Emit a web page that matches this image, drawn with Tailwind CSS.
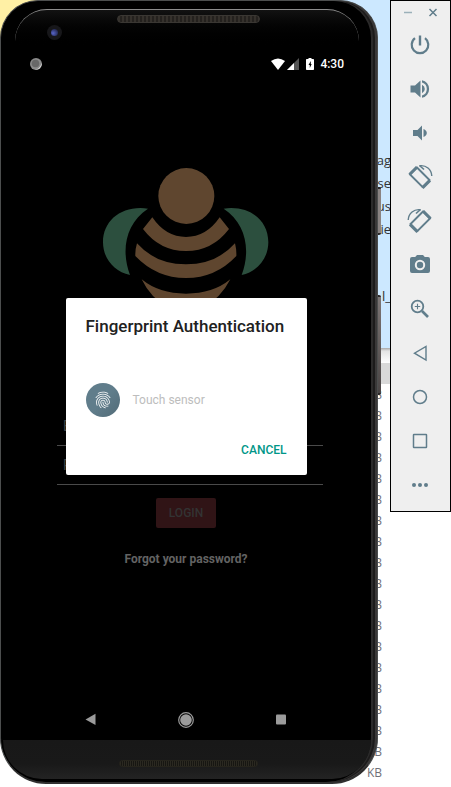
<!DOCTYPE html>
<html lang="en">
<head>
<meta charset="utf-8">
<meta name="viewport" content="width=device-width, initial-scale=1">
<title>Android Emulator</title>
<script src="https://cdn.jsdelivr.net/npm/@tailwindcss/browser@4"></script>
</head>
<body class="bg-white font-[Roboto,sans-serif]">
<div class="relative isolate flex min-h-screen items-start gap-3 overflow-hidden">

  <!-- Windows behind the emulator -->
  <div class="absolute inset-0 -z-10 flex flex-col font-['Open_Sans','Noto_Sans',sans-serif]" aria-hidden="true">
    <div class="flex h-[348px] bg-[#cce8ff]">
      <div class="h-16 w-16 bg-[#fff0a5]"></div>
      <div class="ml-auto mr-[60px] flex flex-col items-end pt-[149px] text-[13px] leading-[23px] text-[#333]">
        <span>pag</span><span>use</span><span>us</span><span>nie</span>
        <span class="pt-11">l_</span>
      </div>
    </div>
    <div class="h-[15px] bg-linear-to-b from-[#a8a8a8] via-[#e4e4e4] via-20% to-white"></div>
    <div class="h-[21px] bg-[#d9d9d9]"></div>
    <div class="mr-[69px] flex flex-col items-end text-[12px] leading-[21px] text-[#707078]">
      <span>KB</span><span>KB</span><span>KB</span><span>KB</span><span>KB</span><span>KB</span><span>KB</span><span>KB</span><span>KB</span><span>KB</span><span>KB</span><span>KB</span><span>KB</span><span>KB</span><span>KB</span><span>KB</span><span>KB</span><span>KB</span><span>KB</span>
    </div>
  </div>

  <!-- Phone -->
  <div class="relative mb-[3px] min-w-0 flex-1 self-stretch">
    <div class="absolute -right-[3px] top-[187px] h-12 w-2 rounded-r-xs border-y-2 border-[#2a2626] bg-[#8a8382]"></div>
    <div class="absolute -right-[3px] top-[295px] h-[100px] w-2 rounded-r-xs border-y-2 border-[#2a2626] bg-linear-to-b from-[#7d7675] to-[#4a4545]"></div>

    <div class="relative flex h-full flex-col rounded-t-[38px] rounded-b-[46px] border border-[#4c4e4e] border-b-2 border-b-[#303030] bg-black pl-[14px] pr-5 shadow-[inset_-2px_0_0_#3a3838,inset_-4px_0_0_#1c1b1b,inset_-6px_0_0_#2b2a2a]">
      <!-- Top bezel -->
      <div class="flex h-[53px] shrink-0 justify-center">
        <div class="absolute left-[14px] right-[18px] top-2 h-10 rounded-t-[32px] border-t border-[#8c8c8c] bg-linear-to-b from-[#121212] to-black"></div>
        <div class="absolute left-[46px] top-[24px] flex size-[15px] items-center justify-center rounded-full bg-[#17171a]">
          <div class="size-[7px] rounded-full bg-radial-[at_30%_60%] from-[#5865c8] to-[#11132a]"></div>
        </div>
        <div class="relative mt-[14px] ml-1 h-[8px] w-[143px] rounded-full border border-[#3a3733] bg-[repeating-linear-gradient(90deg,#35312c_0px,#35312c_2px,#24211e_2px,#24211e_4px)]"></div>
      </div>

      <!-- Screen -->
      <div class="relative flex flex-1 flex-col bg-black">
        <header class="flex h-5 shrink-0 items-center pl-[15px] pr-[13px] text-white">
          <svg class="size-3" viewBox="0 0 12 12" aria-hidden="true"><circle cx="6" cy="6" r="6" fill="#8b8b8b"/><path d="M11.6 5A6 6 0 0 1 5 11.8Q10 11 11.6 5Z" fill="#e4e4e4"/><circle cx="5.5" cy="5.5" r="3.8" fill="#686868"/></svg>
          <div class="ml-auto flex items-center">
            <svg class="h-3 w-[14px]" viewBox="0 0 14 12" aria-label="Wi-Fi"><path d="M0 3Q7-2 14 3L7 12Z" fill="#fff"/></svg>
            <svg class="ml-[2px] h-3 w-3" viewBox="0 0 12 12" aria-label="Signal"><path d="M12 0V12H0Z" fill="#555"/><path d="M7 5V12H0Z" fill="#fff"/></svg>
            <svg class="ml-[7px] h-3 w-2" viewBox="0 0 8 12" aria-label="Charging"><path fill="#fff" fill-rule="evenodd" d="M2.500 0h3v1H7.200q.8 0 .8.8v9.400q0 .8-.8.8H.8q-.8 0-.8-.8V1.800Q0 1 .8 1H2.500ZM4.800 3 2.500 7H3.800V10L5.700 6H4.800Z"/></svg>
            <span class="ml-[6px] text-[12px] font-medium leading-5">4:30</span>
          </div>
        </header>

        <main class="relative flex flex-1 flex-col items-center px-[34px]">
          <svg class="mt-[94px] h-[157px] w-[166px]" viewBox="42 39 498 471" aria-label="Bee logo">
            <g fill="#5f462f">
              <circle cx="292" cy="123" r="84"/>
              <path d="M190 187Q230 246 291 246Q352 246 392 187L420 222Q370 288 291 288Q212 288 162 222Z"/>
              <path d="M144 265Q200 328 291 328Q382 328 438 265Q443 285 442 303Q380 369 291 369Q202 369 139 303Q138 285 144 265Z"/>
              <path d="M158 373Q210 416 291 416Q372 416 424 373Q395 430 340 460H240Q185 430 158 373Z"/>
            </g>
            <g fill="#2c4f3e">
              <path d="M177 161C100 150 42 195 42 262C42 310 75 350 123 360C95 285 110 205 177 161Z"/>
              <path d="M404 161C481 150 538 195 538 262C538 310 505 350 458 360C486 285 471 205 404 161Z"/>
            </g>
          </svg>
          <form class="mt-[82px] flex w-full flex-col items-center">
            <div class="flex w-full flex-col pl-2">
              <input type="email" aria-label="Email" placeholder="Email" class="h-[39px] w-full border-b border-[#4a4a4a] bg-transparent px-[6px] text-[14px] text-[#777] placeholder:text-[#444]">
              <input type="password" aria-label="Password" placeholder="Password" class="h-[39px] w-full border-b border-[#4a4a4a] bg-transparent px-[6px] text-[14px] text-[#777] placeholder:text-[#444]">
            </div>
            <button type="button" class="mt-[13px] h-[30px] w-[60px] rounded-xs bg-[#301416] text-[12px] font-medium text-[#333]">LOGIN</button>
          </form>
          <a href="#" class="mt-[22px] text-[12px] font-bold leading-[18px] text-[#636363]">Forgot your password?</a>

          <div class="absolute inset-0 flex items-center justify-center pb-[2px]">
            <section role="dialog" aria-labelledby="dialog-title" class="flex w-[241px] flex-col rounded-xs bg-white px-5 pt-4">
              <h1 id="dialog-title" class="whitespace-nowrap text-[17px] font-medium leading-6 text-[#212121]">Fingerprint Authentication</h1>
              <div class="mt-[45px] flex items-center gap-[13px]">
                <div class="flex size-[34px] items-center justify-center rounded-full bg-linear-to-br from-[#607d8b] from-50% to-[#526b77]">
                  <svg class="size-5" viewBox="0 0 24 24" fill="#fff" aria-hidden="true"><path d="M17.810 4.470c-.08 0-.16-.02-.23-.06C15.660 3.420 14 3 12.010 3c-1.980 0-3.860.47-5.570 1.410-.24.13-.54.04-.68-.2-.13-.24-.04-.55.2-.68C7.820 2.520 9.860 2 12.010 2c2.130 0 3.990.47 6.030 1.520.25.13.34.43.21.67-.09.18-.26.28-.44.28zM3.500 9.720c-.1 0-.2-.03-.29-.09-.23-.16-.28-.47-.12-.7.99-1.400 2.250-2.500 3.750-3.270C9.980 4.040 14 4.030 17.150 5.650c1.500.77 2.760 1.860 3.750 3.250.16.22.11.54-.12.7-.23.16-.54.11-.7-.12-.9-1.260-2.040-2.250-3.390-2.940-2.870-1.470-6.540-1.470-9.400.01-1.360.7-2.500 1.700-3.400 2.960-.08.14-.23.21-.39.21zm6.250 12.070c-.13 0-.26-.05-.35-.15-.87-.87-1.340-1.430-2.010-2.640-.69-1.230-1.050-2.730-1.050-4.340 0-2.970 2.540-5.390 5.660-5.390s5.660 2.420 5.660 5.390c0 .28-.22.5-.5.5s-.5-.22-.5-.5c0-2.420-2.090-4.390-4.660-4.390-2.570 0-4.660 1.970-4.660 4.390 0 1.440.32 2.770.93 3.850.64 1.150 1.080 1.640 1.850 2.420.19.2.19.51 0 .71-.11.1-.24.15-.37.15zm7.170-1.850c-1.190 0-2.240-.3-3.100-.89-1.490-1.010-2.380-2.650-2.380-4.390 0-.28.22-.5.5-.5s.5.22.5.5c0 1.410.72 2.740 1.940 3.560.71.48 1.540.71 2.540.71.24 0 .64-.03 1.040-.1.27-.05.53.13.58.41.05.27-.13.53-.41.58-.57.11-1.070.12-1.210.12zM14.910 22c-.04 0-.09-.01-.13-.02-1.590-.44-2.630-1.030-3.720-2.100-1.400-1.390-2.170-3.240-2.170-5.220 0-1.620 1.380-2.940 3.080-2.940 1.700 0 3.080 1.320 3.080 2.940 0 1.070.93 1.940 2.080 1.940s2.080-.87 2.080-1.940c0-3.770-3.250-6.830-7.250-6.830-2.840 0-5.440 1.580-6.610 4.030-.39.81-.59 1.760-.59 2.800 0 .78.07 2.010.67 3.610.1.26-.03.55-.29.64-.26.1-.55-.04-.64-.29-.49-1.310-.73-2.610-.73-3.960 0-1.200.23-2.290.68-3.240 1.330-2.790 4.280-4.600 7.510-4.600 4.550 0 8.250 3.510 8.250 7.830 0 1.620-1.380 2.940-3.080 2.940s-3.080-1.320-3.080-2.940c0-1.070-.93-1.940-2.080-1.940s-2.080.87-2.080 1.940c0 1.710.66 3.310 1.870 4.510.95.94 1.860 1.460 3.270 1.850.27.07.42.35.35.61-.05.23-.26.38-.47.38z"/></svg>
                </div>
                <p class="text-[12px] leading-4 text-[#bdbdbd]">Touch sensor</p>
              </div>
              <button type="button" class="mt-[16px] mb-[8px] h-[34px] self-end text-[12px] font-medium text-[#009688]">CANCEL</button>
            </section>
          </div>
        </main>

        <nav class="flex h-10 shrink-0 justify-center" aria-label="Phone navigation">
          <button type="button" aria-label="Back" class="flex w-[95px] items-center justify-center"><svg class="size-4" viewBox="0 0 16 16"><path d="M12.500 1.800V13L2.500 7.500Z" fill="#9b9b9b"/></svg></button>
          <button type="button" aria-label="Home" class="flex w-[95px] items-center justify-center"><svg class="size-4" viewBox="0 0 16 16"><circle cx="8" cy="8" r="7.300" fill="none" stroke="#9b9b9b" stroke-width="1.200"/><circle cx="8" cy="8" r="5.800" fill="#9b9b9b"/></svg></button>
          <button type="button" aria-label="Recent apps" class="flex w-[95px] items-center justify-center"><svg class="size-4" viewBox="0 0 16 16"><rect x="3" y="2.500" width="10" height="10" rx="1" fill="#9b9b9b"/></svg></button>
        </nav>
      </div>

      <!-- Bottom bezel -->
      <div class="flex h-[42px] shrink-0 justify-center">
        <div class="absolute bottom-[3px] left-[2px] right-[6px] h-[39px] rounded-b-[40px] bg-linear-to-b from-[#181818] via-[#191919] via-60% to-[#232323]"></div>
        <div class="relative mt-[20px] ml-1 h-[7px] w-[139px] rounded-full border border-[#26241c] bg-[repeating-linear-gradient(90deg,#2b2921_0px,#2b2921_1px,#171612_1px,#171612_2px)]"></div>
      </div>
    </div>
  </div>

  <!-- Emulator controls -->
  <aside class="flex w-[61px] shrink-0 flex-col border border-black bg-[#efefef] pb-1 pr-px text-[#607d8b]">
    <div class="flex h-[22px] items-center justify-center gap-[13px]">
      <button type="button" aria-label="Minimize"><svg class="size-3" viewBox="0 0 12 12"><path d="M2 6.500H10" stroke="#9bb0b9" stroke-width="1.500"/></svg></button>
      <button type="button" aria-label="Close"><svg class="size-3" viewBox="0 0 12 12"><path d="M2.500 3 9.500 10M9.500 3 2.500 10" stroke="currentColor" stroke-width="1.500"/></svg></button>
    </div>
    <button type="button" aria-label="Power" class="flex h-11 items-center justify-center"><svg class="size-6" viewBox="0 0 24 24" fill="none" stroke="currentColor"><path d="M12 2.500V12.500" stroke-width="2.400"/><path d="M7 5.200A8.300 8.300 0 1 0 17 5.200" stroke-width="2.200"/></svg></button>
    <button type="button" aria-label="Volume up" class="flex h-11 items-center justify-center"><svg class="size-6" viewBox="0 0 24 24" fill="currentColor"><path d="M2.500 8.500H7L12.500 3.500V20.500L7 15.500H2.500Z"/><path d="M14 7.800Q16.800 9.200 16.800 12T14 16.200Z"/><path d="M14 3.200A9 9 0 0 1 14 20.800V18.500A6.800 6.800 0 0 0 14 5.500Z"/></svg></button>
    <button type="button" aria-label="Volume down" class="flex h-11 items-center justify-center"><svg class="size-6" viewBox="0 0 24 24" fill="currentColor"><path d="M5 9H9.500L14 4.500V19.500L9.500 15H5Z"/><path d="M15.500 8Q18.800 9.300 18.800 12T15.500 16Z"/></svg></button>
    <button type="button" aria-label="Rotate left" class="flex h-11 items-center justify-center"><svg class="size-6 overflow-visible" viewBox="0 0 24 24" fill="none" stroke="currentColor"><path d="M9 2.500 21.500 15 14.500 22 2 9.500Z" stroke-width="1.900"/><path d="M1.500 9.500 9 2M14.500 23 22 15.500" stroke-width="3"/><path d="M11.500.8C18-.2 23.500 4.500 23.800 11" stroke-width="1.400"/><path d="M11.500.5 16 4.500" stroke-width="1.600"/></svg></button>
    <button type="button" aria-label="Rotate right" class="flex h-11 items-center justify-center"><svg class="size-6 overflow-visible" viewBox="0 0 24 24" fill="none" stroke="currentColor"><path d="M15 2.500 2.500 15 9.500 22 22 9.500Z" stroke-width="1.900"/><path d="M22.500 9.500 15 2M9.500 23 2 15.500" stroke-width="3"/><path d="M12.500.8C6-.2.500 4.500.2 11" stroke-width="1.400"/><path d="M12.500.5 8 4.500" stroke-width="1.600"/></svg></button>
    <button type="button" aria-label="Screenshot" class="flex h-11 items-center justify-center"><svg class="size-6" viewBox="0 0 24 24" fill="currentColor"><path fill-rule="evenodd" d="M9 2H15L16.800 4H20Q22 4 22 6V18Q22 20 20 20H4Q2 20 2 18V6Q2 4 4 4H7.200ZM12 6.800A5.200 5.200 0 1 0 12 17.200A5.200 5.200 0 1 0 12 6.800Z"/><circle cx="12" cy="12" r="3.200"/></svg></button>
    <button type="button" aria-label="Zoom" class="flex h-11 items-center justify-center"><svg class="size-6" viewBox="0 0 24 24" fill="none" stroke="currentColor"><circle cx="9.500" cy="9.500" r="5.800" stroke-width="1.800"/><path d="M14 14 20 20" stroke-width="2.600"/><path d="M9.500 6.800V12.200M6.800 9.500H12.200" stroke-width="1.100"/></svg></button>
    <button type="button" aria-label="Back" class="flex h-11 items-center justify-center"><svg class="size-6" viewBox="0 0 24 24" fill="none" stroke="currentColor" stroke-width="1.400"><path d="M18 5.500V19L6.500 12.200Z"/></svg></button>
    <button type="button" aria-label="Home" class="flex h-11 items-center justify-center"><svg class="size-6" viewBox="0 0 24 24" fill="none" stroke="currentColor" stroke-width="1.500"><circle cx="12" cy="12" r="6.500"/></svg></button>
    <button type="button" aria-label="Overview" class="flex h-11 items-center justify-center"><svg class="size-6" viewBox="0 0 24 24" fill="none" stroke="currentColor" stroke-width="1.500"><rect x="5.500" y="5.500" width="13" height="13" rx=".5"/></svg></button>
    <button type="button" aria-label="More" class="flex h-11 items-center justify-center"><svg class="size-6" viewBox="0 0 24 24" fill="currentColor"><circle cx="6" cy="12" r="2"/><circle cx="12" cy="12" r="2"/><circle cx="18" cy="12" r="2"/></svg></button>
  </aside>
</div>
</body>
</html>
